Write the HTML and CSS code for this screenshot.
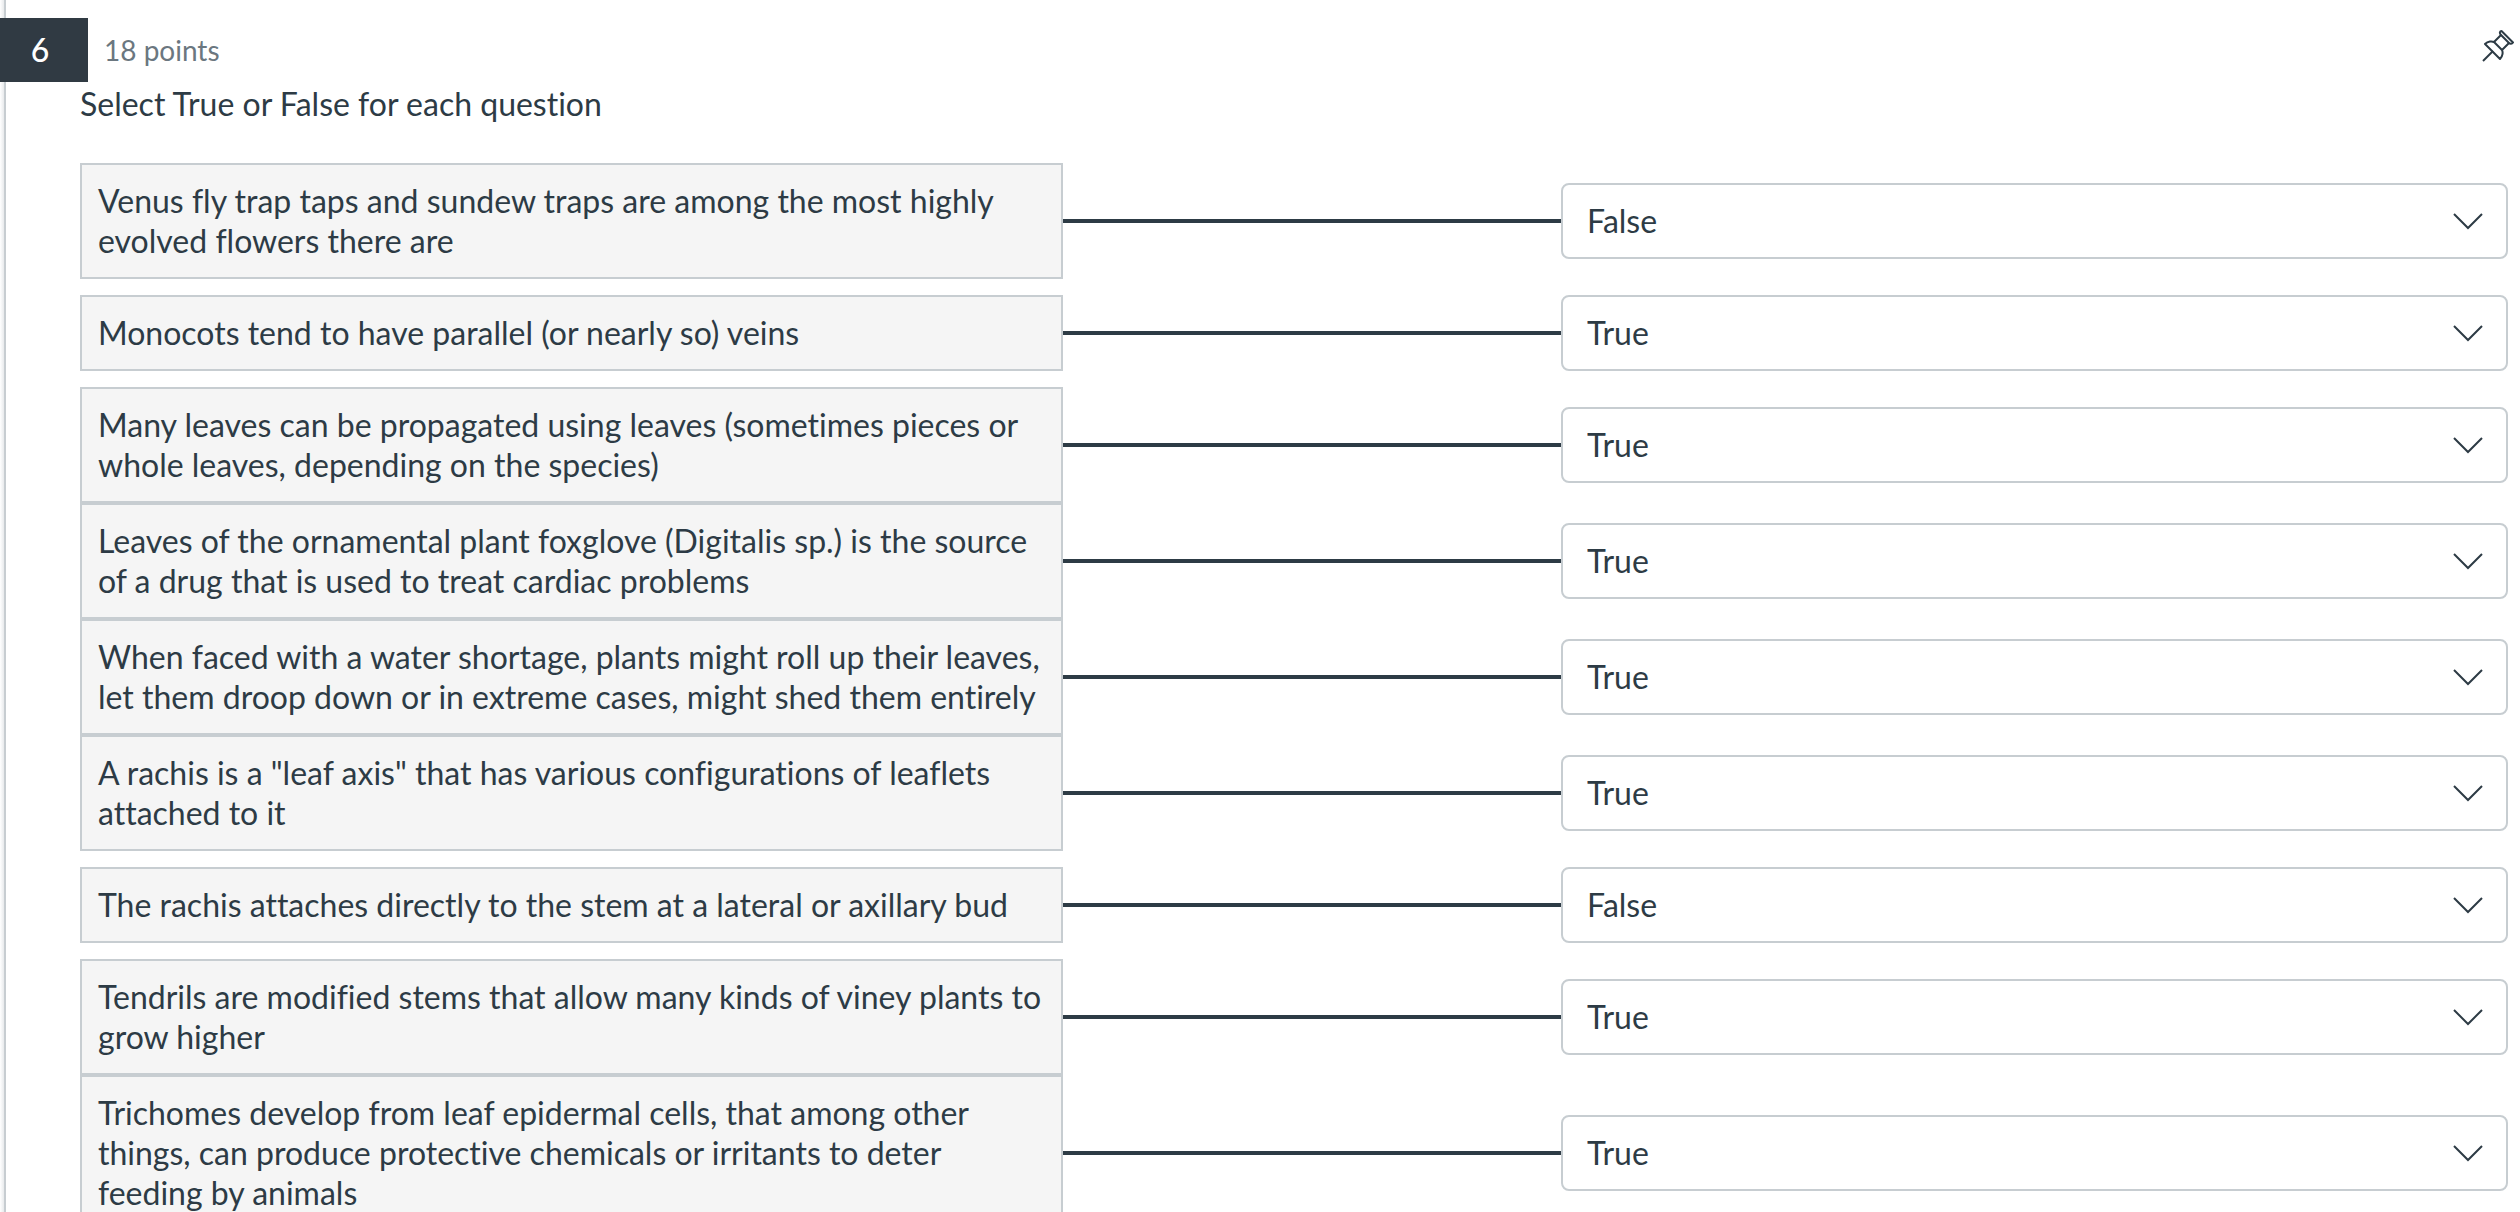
FILE: index.html
```html
<!DOCTYPE html>
<html lang="en">

<head>
  <meta charset="UTF-8" />
  <meta name="viewport" content="width=device-width, initial-scale=1.0" />
  <title>Question 6</title>
  <link rel="stylesheet" href="styles.css">
</head>

<body>
  <svg class="sprite" aria-hidden="true">
    <symbol id="chevron" viewBox="0 0 32 32">
      <path d="M2 9 L16 23 L30 9" fill="none" stroke="currentColor" stroke-width="2" />
    </symbol>
  </svg>

  <main class="question">
    <header class="question-header">
      <span class="question-number">6</span>
      <span class="question-points">18 points</span>
      <button class="pin-button" type="button" aria-label="Pin question">
        <svg class="pin-icon" viewBox="0 0 32 32" fill="none" stroke="currentColor" stroke-width="2" stroke-linejoin="round">
          <path d="M1 31 L11 21" />
          <path d="M3 14 C6 11 10 11 12 12 L19 5 C17 3 18 1 19.500 1 L31 12.500 C30 14 28 14 27 13 L20 20 C21 22 21 26 18 29 Z" />
          <path d="M12 12 L20 20 M19 5 L27 13" />
        </svg>
      </button>
    </header>

    <div class="question-body">
      <p class="prompt">Select True or False for each question</p>

      <div class="match-row">
        <label class="statement" for="answer1">Venus fly trap taps and sundew traps are among the most highly evolved flowers there are</label>
        <div class="connector"></div>
        <div class="answer">
          <select id="answer1">
            <option>True</option>
            <option selected>False</option>
          </select>
          <svg class="chevron"><use href="#chevron" /></svg>
        </div>
      </div>

      <div class="match-row">
        <label class="statement" for="answer2">Monocots tend to have parallel (or nearly so) veins</label>
        <div class="connector"></div>
        <div class="answer">
          <select id="answer2">
            <option selected>True</option>
            <option>False</option>
          </select>
          <svg class="chevron"><use href="#chevron" /></svg>
        </div>
      </div>

      <div class="match-row">
        <label class="statement" for="answer3">Many leaves can be propagated using leaves (sometimes pieces or whole leaves, depending on the species)</label>
        <div class="connector"></div>
        <div class="answer">
          <select id="answer3">
            <option selected>True</option>
            <option>False</option>
          </select>
          <svg class="chevron"><use href="#chevron" /></svg>
        </div>
      </div>

      <div class="match-row">
        <label class="statement" for="answer4">Leaves of the ornamental plant foxglove (Digitalis sp.) is the source of a drug that is used to treat cardiac problems</label>
        <div class="connector"></div>
        <div class="answer">
          <select id="answer4">
            <option selected>True</option>
            <option>False</option>
          </select>
          <svg class="chevron"><use href="#chevron" /></svg>
        </div>
      </div>

      <div class="match-row">
        <label class="statement" for="answer5">When faced with a water shortage, plants might roll up their leaves, let them droop down or in extreme cases, might shed them entirely</label>
        <div class="connector"></div>
        <div class="answer">
          <select id="answer5">
            <option selected>True</option>
            <option>False</option>
          </select>
          <svg class="chevron"><use href="#chevron" /></svg>
        </div>
      </div>

      <div class="match-row">
        <label class="statement" for="answer6">A rachis is a "leaf axis" that has various configurations of leaflets attached to it</label>
        <div class="connector"></div>
        <div class="answer">
          <select id="answer6">
            <option selected>True</option>
            <option>False</option>
          </select>
          <svg class="chevron"><use href="#chevron" /></svg>
        </div>
      </div>

      <div class="match-row">
        <label class="statement" for="answer7">The rachis attaches directly to the stem at a lateral or axillary bud</label>
        <div class="connector"></div>
        <div class="answer">
          <select id="answer7">
            <option>True</option>
            <option selected>False</option>
          </select>
          <svg class="chevron"><use href="#chevron" /></svg>
        </div>
      </div>

      <div class="match-row">
        <label class="statement" for="answer8">Tendrils are modified stems that allow many kinds of viney plants to grow higher</label>
        <div class="connector"></div>
        <div class="answer">
          <select id="answer8">
            <option selected>True</option>
            <option>False</option>
          </select>
          <svg class="chevron"><use href="#chevron" /></svg>
        </div>
      </div>

      <div class="match-row">
        <label class="statement" for="answer9">Trichomes develop from leaf epidermal cells, that among other things, can produce protective chemicals or irritants to deter feeding by animals</label>
        <div class="connector"></div>
        <div class="answer">
          <select id="answer9">
            <option selected>True</option>
            <option>False</option>
          </select>
          <svg class="chevron"><use href="#chevron" /></svg>
        </div>
      </div>
    </div>
  </main>
</body>

</html>
```

FILE: styles.css
```css
* {
  box-sizing: border-box;
}

body {
  font-family: Lato, "Liberation Sans", sans-serif;
  font-size: 32px;
  line-height: 40px;
  text-rendering: optimizeLegibility;
  font-variant-ligatures: none;
  color: #2d3b45;
  background: #fff;
  margin: 0;
}

.sprite {
  display: none;
}

.question {
  height: 100vh;
  overflow: hidden;
  padding-top: 18px;
  /* left edge of the question card */
  background: linear-gradient(to right, #fff, #e8eaec 4px, #c7cdd1 4px, #c7cdd1 6px, #fff 6px);
}

.question-header {
  display: flex;
  align-items: center;
}

.question-number {
  width: 88px;
  padding: 12px 8px 12px 0;
  text-align: center;
  font-weight: 500;
  color: #fff;
  background: #303a43;
}

.question-points {
  margin-left: 16px;
  font-size: 28px;
  color: #6b7780;
}

.pin-button {
  margin: 0 6px 8px auto;
  padding: 0;
  border: none;
  background: none;
  color: #2d3b45;
  cursor: pointer;
}

.pin-icon {
  display: block;
  width: 32px;
  height: 32px;
}

.question-body {
  padding: 0 12px 0 80px;
}

.prompt {
  margin: 2px 0 39px;
}

.match-row {
  display: grid;
  grid-template-columns: 40.5% 20.5% 39%;
  align-items: center;
}

.statement {
  padding: 16px;
  border: 2px solid #c7cdd1;
  background: #f5f5f5;
}

.connector {
  height: 4px;
  background: #2d3b45;
}

.answer {
  position: relative;
  margin: 16px 0;
}

.answer select {
  display: block;
  width: 100%;
  height: 76px;
  padding: 0 80px 0 24px;
  font: inherit;
  color: inherit;
  border: 2px solid #c7cdd1;
  border-radius: 8px;
  background: #fff;
  appearance: none;
}

.chevron {
  position: absolute;
  top: 22px;
  right: 24px;
  width: 32px;
  height: 32px;
  pointer-events: none;
}
```
